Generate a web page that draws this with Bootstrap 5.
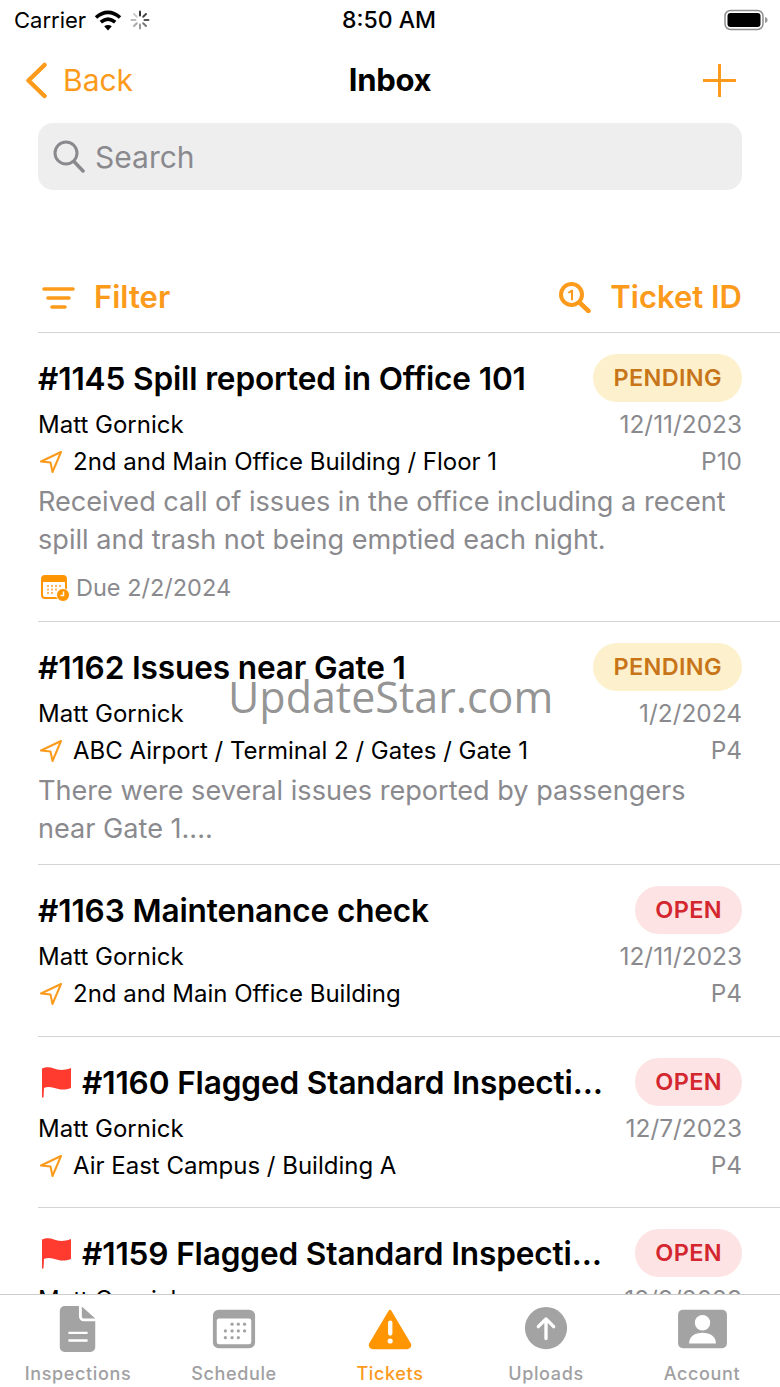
<!DOCTYPE html>
<html lang="en">

<head>
    <meta charset="UTF-8">
    <meta name="viewport" content="width=device-width, initial-scale=1.0">
    <title>Inbox</title>
    <link href="https://cdn.jsdelivr.net/npm/bootstrap@5.3.0/dist/css/bootstrap.min.css" rel="stylesheet">
    <style>
        body {
            font-family: Inter, "Liberation Sans", sans-serif;
            background-color: #fff;
            color: #000;
        }

        .app-frame {
            position: relative;
            height: 1387px;
        }

        /* status bar */
        .status-bar {
            height: 40px;
            padding: 0 12px 0 14px;
            font-size: 22px;
        }

        .status-left {
            width: 300px;
        }

        .status-time {
            font-size: 23px;
            font-weight: 500;
        }

        .status-right {
            width: 304px;
        }

        /* nav bar */
        .nav-head {
            height: 83px;
            padding: 0 44px 2px 25px;
        }

        .nav-back {
            color: #fb9a1b;
            font-size: 30px;
            width: 219px;
        }

        .nav-back svg {
            margin-right: 15px;
        }

        .nav-title {
            font-size: 31px;
            font-weight: 700;
            letter-spacing: -.3px;
        }

        .nav-add {
            width: 200px;
        }

        /* search */
        .search-box {
            height: 67px;
            margin: 0 38px;
            padding-left: 15px;
            border-radius: 15px;
            background-color: #eeeeef;
            color: #8a8a8e;
            font-size: 30px;
        }

        .search-box span {
            margin-left: 2px;
            padding-top: 2px;
        }

        /* filter row */
        .filter-row {
            height: 142px;
            padding: 73px 38px 0 42px;
            color: #fb9a1b;
            font-size: 31px;
            font-weight: 600;
        }

        .filter-row .lens {
            margin-right: 19px;
        }

        /* tickets */
        .ticket-list {
            margin-left: 38px;
        }

        .ticket-list .ticket-item {
            padding: 21px 38px 17px 0;
            border-top: 1px solid #d4d4d6;
            border-bottom: 0;
            color: #000;
        }

        .ticket-list .ticket-short {
            padding-bottom: 24px;
        }

        .ticket-list .ticket-flagged {
            padding-bottom: 23px;
        }

        .ticket-head {
            height: 48px;
            margin-bottom: 4px;
        }

        .ticket-title {
            padding-top: 2px;
            font-size: 31.600px;
            font-weight: 600;
            letter-spacing: -.15px;
        }

        .status-pill {
            padding: 0 20px;
            line-height: 48px;
            height: 48px;
            font-size: 23.500px;
            font-weight: 600;
            letter-spacing: .35px;
        }

        .pill-pending {
            background-color: #fdf1cd;
            color: #c8751a;
        }

        .pill-open {
            background-color: #fde3e3;
            color: #d3262e;
        }

        .meta-line {
            height: 37px;
            font-size: 24px;
            line-height: 37px;
        }

        .meta-side {
            color: #8a8a8e;
            font-size: 24.400px;
        }

        .meta-pin {
            margin: 0 11px 0 2px;
        }

        .ticket-desc {
            margin: 3px 0 0;
            color: #8a8a8e;
            font-size: 27.100px;
            line-height: 37.500px;
        }

        .ticket-due {
            height: 32px;
            margin-top: 14px;
            padding-left: 3px;
            color: #8a8a8e;
            font-size: 23.500px;
        }

        .ticket-due svg {
            margin-right: 6px;
        }

        /* tab bar */
        .tab-bar {
            height: 93px;
            border-top: 1px solid #ccc;
            background-color: #fff;
        }

        .tab-link {
            width: 156px;
            height: 92px;
            padding-top: 11px;
            color: #a0a0a2;
            font-size: 18px;
            font-weight: 500;
            letter-spacing: .65px;
        }

        .tab-icon {
            height: 48px;
            margin-bottom: 8px;
        }

        .tab-active {
            color: #fb9a1b;
        }

        /* site watermark over the screenshot */
        .mark-text {
            position: absolute;
            left: 228px;
            top: 671px;
            color: rgba(120, 120, 120, .8);
            font-family: "Open Sans", sans-serif;
            font-size: 43px;
            line-height: 52px;
        }
    </style>
</head>

<body>
    <div class="app-frame d-flex flex-column overflow-hidden">

        <!-- status bar -->
        <div class="status-bar d-flex align-items-center justify-content-between flex-shrink-0">
            <div class="status-left d-flex align-items-center">
                <span>Carrier</span>
                <svg class="ms-2" width="28" height="21" viewBox="0 0 28 21" fill="none" stroke="#000" stroke-width="3.600" stroke-linecap="butt">
                    <path d="M2 7.500C9.500 .7 18.500 .7 26 7.500" />
                    <path d="M6.800 12.200C11.500 8.100 16.500 8.100 21.200 12.200" />
                    <path d="M14 20.500l-3.800-4.300c2.400-1.700 5.200-1.700 7.600 0z" fill="#000" stroke="none" />
                </svg>
                <svg class="ms-2" width="20" height="20" viewBox="0 0 20 20" stroke-width="2" stroke-linecap="round">
                    <path d="M10 1.500v4" stroke="#333" />
                    <path d="M16 4l-2.800 2.800" stroke="#444" />
                    <path d="M18.500 10h-4" stroke="#555" />
                    <path d="M16 16l-2.800-2.800" stroke="#777" />
                    <path d="M10 18.500v-4" stroke="#999" />
                    <path d="M4 16l2.800-2.800" stroke="#aaa" />
                    <path d="M1.500 10h4" stroke="#bbb" />
                    <path d="M4 4l2.800 2.800" stroke="#ccc" />
                </svg>
            </div>
            <span class="status-time">8:50 AM</span>
            <div class="status-right d-flex justify-content-end">
                <svg width="44" height="22" viewBox="0 0 44 22">
                    <rect x="1" y="1.500" width="38" height="19" rx="5.500" fill="none" stroke="#8e8e8e" stroke-width="1.500" />
                    <rect x="3.500" y="4" width="33" height="14" rx="3" fill="#000" />
                    <path d="M41 8c1.800.4 2.600 1.600 2.600 3s-.8 2.600-2.600 3z" fill="#999" />
                </svg>
            </div>
        </div>

        <!-- nav bar -->
        <div class="nav-head d-flex align-items-center justify-content-between flex-shrink-0">
            <div class="nav-back d-flex align-items-center">
                <svg width="23" height="37" viewBox="0 0 23 37" fill="none" stroke="#fb9a1b" stroke-width="4.500" stroke-linecap="round" stroke-linejoin="round">
                    <path d="M19.500 3L3.500 18.500 19.500 34" />
                </svg>
                <span>Back</span>
            </div>
            <span class="nav-title">Inbox</span>
            <div class="nav-add d-flex justify-content-end">
                <svg width="33" height="33" viewBox="0 0 33 33" stroke="#fb9a1b" stroke-width="3">
                    <path d="M16.500 0v33M0 16.500h33" />
                </svg>
            </div>
        </div>

        <!-- search -->
        <div class="search-box d-flex align-items-center flex-shrink-0">
            <svg class="me-2" width="32" height="33" viewBox="0 0 32 33" fill="none" stroke="#8a8a8e" stroke-width="3" stroke-linecap="round">
                <circle cx="13" cy="13" r="11" />
                <path d="M21 21.500l9 9.500" stroke-width="3.500" />
            </svg>
            <span>Search</span>
        </div>

        <!-- filter row -->
        <div class="filter-row d-flex align-items-center justify-content-between flex-shrink-0">
            <div class="d-flex align-items-center">
                <svg class="me-3" width="36" height="22" viewBox="0 0 36 22" stroke="#fb9a1b" stroke-width="3.600" stroke-linecap="round">
                    <path d="M2 2h29M6 11h21M10 20h13" />
                </svg>
                <span>Filter</span>
            </div>
            <div class="d-flex align-items-center">
                <svg class="lens" width="32" height="31" viewBox="0 0 32 31" fill="none" stroke="#fb9a1b" stroke-linecap="round">
                    <circle cx="12.500" cy="12.500" r="10.500" stroke-width="4" />
                    <path d="M21 21l8.500 8" stroke-width="4.500" />
                    <path d="M10 10.500l3-2v9" stroke-width="2" stroke-linejoin="round" />
                </svg>
                <span>Ticket ID</span>
            </div>
        </div>

        <!-- tickets -->
        <div class="flex-grow-1 overflow-hidden">
            <div class="ticket-list list-group list-group-flush">

                <div class="ticket-item list-group-item">
                    <div class="ticket-head d-flex align-items-center justify-content-between">
                        <span class="ticket-title text-truncate">#1145 Spill reported in Office 101</span>
                        <span class="status-pill pill-pending rounded-pill">PENDING</span>
                    </div>
                    <div class="meta-line d-flex justify-content-between">
                        <span>Matt Gornick</span>
                        <span class="meta-side">12/11/2023</span>
                    </div>
                    <div class="meta-line d-flex align-items-center justify-content-between">
                        <span class="d-flex align-items-center">
                            <svg class="meta-pin" width="22" height="22" viewBox="0 0 22 22" fill="none" stroke="#fb9a1b" stroke-width="2" stroke-linejoin="round">
                                <path d="M21 1L1 10.500 10.500 11.500 12.500 21z" />
                            </svg>
                            2nd and Main Office Building / Floor 1
                        </span>
                        <span class="meta-side">P10</span>
                    </div>
                    <p class="ticket-desc">Received call of issues in the office including a recent spill and trash not being emptied each night.</p>
                    <div class="ticket-due d-flex align-items-center">
                        <svg width="29" height="27" viewBox="0 0 29 27">
                            <rect x="1" y="1" width="24" height="22" rx="3" fill="#fff" stroke="#ff9500" stroke-width="2" />
                            <path d="M1 7V4a3 3 0 0 1 3-3h18a3 3 0 0 1 3 3v3z" fill="#ff9500" />
                            <path d="M6 11h2M10 11h2M14 11h2M18 11h2M6 14.500h2M10 14.500h2M14 14.500h2M6 18h2M10 18h2" stroke="#ffb75c" stroke-width="2" />
                            <circle cx="22" cy="20" r="6.500" fill="#ff9500" stroke="#fff" stroke-width="1" />
                            <path d="M22.500 16.500v4h-3" fill="none" stroke="#fff" stroke-width="1.500" />
                        </svg>
                        <span>Due 2/2/2024</span>
                    </div>
                </div>

                <div class="ticket-item list-group-item">
                    <div class="ticket-head d-flex align-items-center justify-content-between">
                        <span class="ticket-title text-truncate">#1162 Issues near Gate 1</span>
                        <span class="status-pill pill-pending rounded-pill">PENDING</span>
                    </div>
                    <div class="meta-line d-flex justify-content-between">
                        <span>Matt Gornick</span>
                        <span class="meta-side">1/2/2024</span>
                    </div>
                    <div class="meta-line d-flex align-items-center justify-content-between">
                        <span class="d-flex align-items-center">
                            <svg class="meta-pin" width="22" height="22" viewBox="0 0 22 22" fill="none" stroke="#fb9a1b" stroke-width="2" stroke-linejoin="round">
                                <path d="M21 1L1 10.500 10.500 11.500 12.500 21z" />
                            </svg>
                            ABC Airport / Terminal 2 / Gates / Gate 1
                        </span>
                        <span class="meta-side">P4</span>
                    </div>
                    <p class="ticket-desc">There were several issues reported by passengers<br>near Gate 1....</p>
                </div>

                <div class="ticket-item ticket-short list-group-item">
                    <div class="ticket-head d-flex align-items-center justify-content-between">
                        <span class="ticket-title text-truncate">#1163 Maintenance check</span>
                        <span class="status-pill pill-open rounded-pill">OPEN</span>
                    </div>
                    <div class="meta-line d-flex justify-content-between">
                        <span>Matt Gornick</span>
                        <span class="meta-side">12/11/2023</span>
                    </div>
                    <div class="meta-line d-flex align-items-center justify-content-between">
                        <span class="d-flex align-items-center">
                            <svg class="meta-pin" width="22" height="22" viewBox="0 0 22 22" fill="none" stroke="#fb9a1b" stroke-width="2" stroke-linejoin="round">
                                <path d="M21 1L1 10.500 10.500 11.500 12.500 21z" />
                            </svg>
                            2nd and Main Office Building
                        </span>
                        <span class="meta-side">P4</span>
                    </div>
                </div>

                <div class="ticket-item ticket-flagged list-group-item">
                    <div class="ticket-head d-flex align-items-center justify-content-between">
                        <div class="d-flex align-items-center flex-grow-1 overflow-hidden me-4 pe-1">
                            <svg class="flex-shrink-0 me-2" width="36" height="32" viewBox="0 0 36 32">
                                <path d="M4 2.500c4.500-2 8-1.500 12 0s9 2.500 17-.500v20c-7 2.500-12 1.500-16.500 0s-8-1.500-10.500 0l-.5 9.500H4z" fill="#ff3b30" />
                            </svg>
                            <span class="ticket-title text-truncate">#1160 Flagged Standard Inspection</span>
                        </div>
                        <span class="status-pill pill-open rounded-pill flex-shrink-0">OPEN</span>
                    </div>
                    <div class="meta-line d-flex justify-content-between">
                        <span>Matt Gornick</span>
                        <span class="meta-side">12/7/2023</span>
                    </div>
                    <div class="meta-line d-flex align-items-center justify-content-between">
                        <span class="d-flex align-items-center">
                            <svg class="meta-pin" width="22" height="22" viewBox="0 0 22 22" fill="none" stroke="#fb9a1b" stroke-width="2" stroke-linejoin="round">
                                <path d="M21 1L1 10.500 10.500 11.500 12.500 21z" />
                            </svg>
                            Air East Campus / Building A
                        </span>
                        <span class="meta-side">P4</span>
                    </div>
                </div>

                <div class="ticket-item ticket-short list-group-item">
                    <div class="ticket-head d-flex align-items-center justify-content-between">
                        <div class="d-flex align-items-center flex-grow-1 overflow-hidden me-4 pe-1">
                            <svg class="flex-shrink-0 me-2" width="36" height="32" viewBox="0 0 36 32">
                                <path d="M4 2.500c4.500-2 8-1.500 12 0s9 2.500 17-.500v20c-7 2.500-12 1.500-16.500 0s-8-1.500-10.500 0l-.5 9.500H4z" fill="#ff3b30" />
                            </svg>
                            <span class="ticket-title text-truncate">#1159 Flagged Standard Inspection</span>
                        </div>
                        <span class="status-pill pill-open rounded-pill flex-shrink-0">OPEN</span>
                    </div>
                    <div class="meta-line d-flex justify-content-between">
                        <span>Matt Gornick</span>
                        <span class="meta-side">12/9/2023</span>
                    </div>
                </div>

            </div>
        </div>

        <!-- tab bar -->
        <div class="tab-bar d-flex flex-shrink-0">
            <div class="tab-link d-flex flex-column align-items-center">
                <svg class="tab-icon" width="38" height="48" viewBox="0 0 38 48">
                    <path d="M5 0h15v11a5 5 0 0 0 5 5h12v27a5 5 0 0 1-5 5H5a5 5 0 0 1-5-5V5a5 5 0 0 1 5-5z" fill="#a3a3a3" />
                    <path d="M23 .5L37 13H25a2 2 0 0 1-2-2z" fill="#a3a3a3" />
                    <path d="M9 28h20M9 36h20" stroke="#fff" stroke-width="2.500" />
                </svg>
                <span>Inspections</span>
            </div>
            <div class="tab-link d-flex flex-column align-items-center">
                <svg class="tab-icon" width="44" height="48" viewBox="0 0 44 48">
                    <rect y="4" width="44" height="40" rx="6" fill="#a3a3a3" />
                    <rect x="4" y="13" width="36" height="27" rx="2.500" fill="#fff" />
                    <g fill="#a3a3a3">
                        <circle cx="20" cy="19" r="1.700" /><circle cx="26.500" cy="19" r="1.700" /><circle cx="33" cy="19" r="1.700" />
                        <circle cx="13" cy="26" r="1.700" /><circle cx="20" cy="26" r="1.700" /><circle cx="26.500" cy="26" r="1.700" /><circle cx="33" cy="26" r="1.700" />
                        <circle cx="13" cy="33" r="1.700" /><circle cx="20" cy="33" r="1.700" /><circle cx="26.500" cy="33" r="1.700" />
                    </g>
                </svg>
                <span>Schedule</span>
            </div>
            <div class="tab-link tab-active d-flex flex-column align-items-center">
                <svg class="tab-icon" width="46" height="48" viewBox="0 0 46 48">
                    <path d="M23 5.500L43.500 40a2.500 2.500 0 0 1-2.200 3.500H4.700A2.500 2.500 0 0 1 2.500 40z" fill="#ff9500" stroke="#ff9500" stroke-width="3" stroke-linejoin="round" />
                    <rect x="21" y="15" width="4.500" height="16" rx="2.200" fill="#fff" />
                    <circle cx="23.200" cy="36.500" r="2.700" fill="#fff" />
                </svg>
                <span>Tickets</span>
            </div>
            <div class="tab-link d-flex flex-column align-items-center">
                <svg class="tab-icon" width="44" height="48" viewBox="0 0 44 48">
                    <circle cx="22" cy="23" r="22" fill="#a3a3a3" />
                    <path d="M22 34V14M14 21.500L22 13.500 30 21.500" fill="none" stroke="#fff" stroke-width="3.500" stroke-linecap="round" stroke-linejoin="round" />
                </svg>
                <span>Uploads</span>
            </div>
            <div class="tab-link d-flex flex-column align-items-center">
                <svg class="tab-icon" width="51" height="48" viewBox="0 0 51 48">
                    <rect y="4" width="51" height="40" rx="5" fill="#a3a3a3" />
                    <circle cx="25.500" cy="17.500" r="8" fill="#fff" />
                    <path d="M11.500 39c0-7 6-11 14-11s14 4 14 11z" fill="#fff" />
                </svg>
                <span>Account</span>
            </div>
        </div>

        <div class="mark-text">UpdateStar.com</div>
    </div>

    <script src="https://cdn.jsdelivr.net/npm/bootstrap@5.3.0/dist/js/bootstrap.bundle.min.js"></script>
</body>

</html>
